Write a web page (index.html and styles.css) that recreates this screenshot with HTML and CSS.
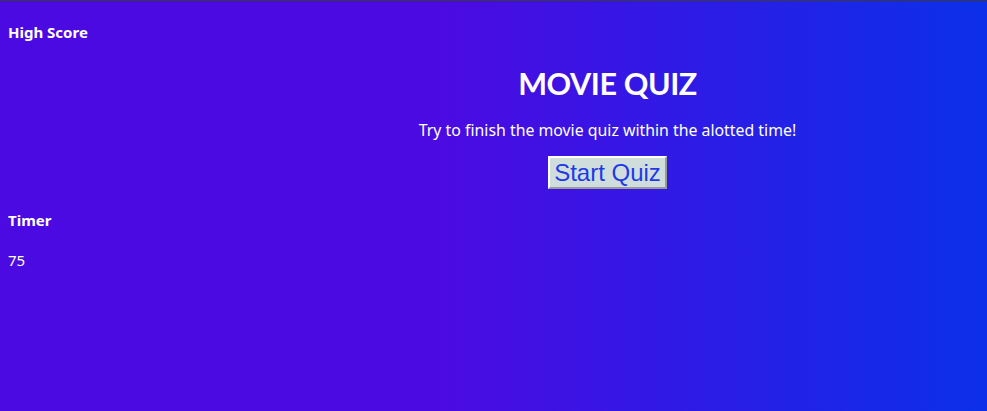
FILE: index.html
```html
<!DOCTYPE html>
<html>
<head>
<meta charset="utf-8">
<link rel="stylesheet" href="styles.css">
</head>
<body>
<div class="page">
  <h4 class="label high">High Score</h4>
  <main class="quiz">
    <h1 class="title">MOVIE QUIZ</h1>
    <p class="intro">Try to finish the movie quiz within the alotted time!</p>
    <button class="start">Start Quiz</button>
  </main>
  <h4 class="label timer">Timer</h4>
  <p class="count">75</p>
</div>
</body>
</html>
```
FILE: styles.css
```css
html, body {
  margin: 0;
  height: 100%;
}
body {
  border-top: 1px solid #3b3b3b;
  box-sizing: border-box;
  background: linear-gradient(90deg, #4b0ae2 45%, #0b30ea 100%);
  color: #ffffff;
  font-family: "Noto Sans", "DejaVu Sans", sans-serif;
}
.page {
  padding: 0 8px;
  display: flex;
  flex-direction: column;
}
.label {
  font-size: 15px;
  font-weight: bold;
  margin: 0;
  line-height: 20px;
}
.high {
  margin-top: 21px;
}
.quiz {
  margin-left: 228px;
  display: flex;
  flex-direction: column;
  align-items: center;
}
.title {
  font-family: Lato, "Noto Sans", sans-serif;
  font-size: 30.5px;
  letter-spacing: -0.4px;
  margin: 19px 0 0;
  line-height: 44px;
}
.intro {
  font-size: 15.85px;
  margin: 15px 0 0;
  line-height: 20px;
}
.start {
  margin-top: 16px;
  font-family: "Liberation Sans", Arial, sans-serif;
  font-size: 24px;
  color: #1d3ae6;
  background: #d0dddd;
  border: 2px solid;
  border-color: #ffffff #9a9a9a #9a9a9a #ffffff;
  padding: 1px 4px;
  line-height: 27px;
}
.timer {
  margin-top: 21px;
}
.count {
  font-size: 15px;
  margin: 20px 0 0;
  line-height: 20px;
}
```
